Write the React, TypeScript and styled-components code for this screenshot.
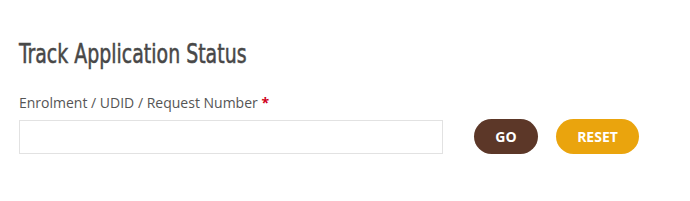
import * as React from "react";
import styled, { createGlobalStyle } from "styled-components";

const GlobalStyle = createGlobalStyle`
  html, body {
    margin: 0;
    padding: 0;
    background: #ffffff;
  }
  body {
    font-family: "Open Sans", "Liberation Sans", sans-serif;
  }
`;

const TrackStatus: React.FunctionComponent = () => {
  return (
    <Section>
      <Title>Track Application Status</Title>
      <Label htmlFor="request-number">
        Enrolment / UDID / Request Number <Required>*</Required>
      </Label>
      <FormRow>
        <TextInput id="request-number" type="text" />
        <ActionButton $tone="dark">GO</ActionButton>
        <ActionButton $tone="amber">RESET</ActionButton>
      </FormRow>
    </Section>
  );
};

export default function App() {
  return (
    <>
      <GlobalStyle />
      <TrackStatus />
    </>
  );
}

const Section = styled.section`
  padding: 39px 19px 0;
`;

const Title = styled.h2`
  margin: 0;
  font-family: "DejaVu Sans Condensed", "DejaVu Sans", sans-serif;
  font-weight: 400;
  font-size: 26px;
  line-height: 30px;
  color: #484848;
  -webkit-text-stroke: 0.5px #484848;
  transform: scaleX(0.81);
  transform-origin: left center;
  white-space: nowrap;
`;

const Label = styled.label`
  display: block;
  margin-top: 24px;
  font-size: 14px;
  line-height: 20px;
  color: #555555;
`;

const Required = styled.span`
  color: #d0021b;
  font-weight: 700;
`;

const FormRow = styled.div`
  display: flex;
  align-items: center;
  margin-top: 6px;
`;

const TextInput = styled.input`
  box-sizing: border-box;
  width: 424px;
  height: 34px;
  margin: 0 31px 0 0;
  padding: 0 10px;
  border: 1px solid #e2e2e2;
  border-radius: 0;
  background: #ffffff;
  font-family: inherit;
  font-size: 14px;
  outline: none;
`;

const ActionButton = styled.button<{ $tone: "dark" | "amber" }>`
  box-sizing: border-box;
  width: ${({ $tone }) => ($tone === "dark" ? "64px" : "83px")};
  height: 35px;
  padding: 0;
  margin-right: 18px;
  border: none;
  border-radius: 18px;
  background: ${({ $tone }) => ($tone === "dark" ? "#5c3728" : "#eaa40d")};
  color: #ffffff;
  font-family: "Open Sans", "Liberation Sans", sans-serif;
  font-weight: 700;
  font-size: 14px;
  cursor: pointer;
`;
